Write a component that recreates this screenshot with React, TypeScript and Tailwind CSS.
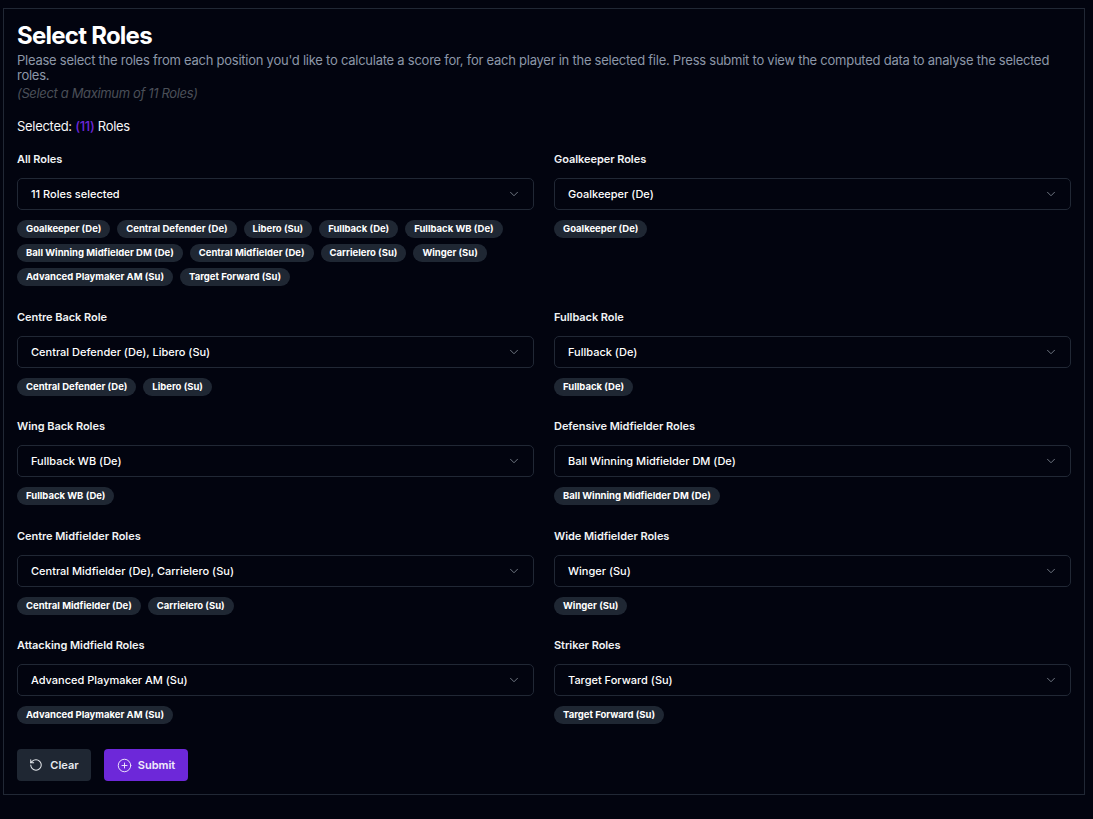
import React from "react";
import { ChevronDown, RotateCcw, CirclePlus } from "lucide-react";

const sections = [
  {
    label: "All Roles",
    value: "11 Roles selected",
    chips: [
      "Goalkeeper (De)",
      "Central Defender (De)",
      "Libero (Su)",
      "Fullback (De)",
      "Fullback WB (De)",
      "Ball Winning Midfielder DM (De)",
      "Central Midfielder (De)",
      "Carrielero (Su)",
      "Winger (Su)",
      "Advanced Playmaker AM (Su)",
      "Target Forward (Su)",
    ],
  },
  { label: "Goalkeeper Roles", value: "Goalkeeper (De)", chips: ["Goalkeeper (De)"] },
  {
    label: "Centre Back Role",
    value: "Central Defender (De), Libero (Su)",
    chips: ["Central Defender (De)", "Libero (Su)"],
  },
  { label: "Fullback Role", value: "Fullback (De)", chips: ["Fullback (De)"] },
  { label: "Wing Back Roles", value: "Fullback WB (De)", chips: ["Fullback WB (De)"] },
  {
    label: "Defensive Midfielder Roles",
    value: "Ball Winning Midfielder DM (De)",
    chips: ["Ball Winning Midfielder DM (De)"],
  },
  {
    label: "Centre Midfielder Roles",
    value: "Central Midfielder (De), Carrielero (Su)",
    chips: ["Central Midfielder (De)", "Carrielero (Su)"],
  },
  { label: "Wide Midfielder Roles", value: "Winger (Su)", chips: ["Winger (Su)"] },
  {
    label: "Attacking Midfield Roles",
    value: "Advanced Playmaker AM (Su)",
    chips: ["Advanced Playmaker AM (Su)"],
  },
  { label: "Striker Roles", value: "Target Forward (Su)", chips: ["Target Forward (Su)"] },
];

function RoleSelect({ label, value, chips }: { label: string; value: string; chips: string[] }) {
  return (
    <div>
      <div className="text-[11px] leading-[14px] font-semibold tracking-[-0.05px] text-[#f1f3f5]">{label}</div>
      <div className="mt-[12px] h-[32px] flex items-center justify-between pl-[13px] pr-[12px] rounded-[5px] border border-[#212835] text-[11px] font-medium text-white">
        <span>{value}</span>
        <ChevronDown className="w-[14px] h-[14px] text-[#7d8590]" strokeWidth={1.5} />
      </div>
      <div className="mt-[10px] flex flex-wrap gap-x-[7px] gap-y-[6px]">
        {chips.map((c) => (
          <span
            key={c}
            className="h-[18px] flex items-center px-[9px] rounded-full bg-[#1f2733] text-[9.5px] font-bold text-white"
          >
            {c}
          </span>
        ))}
      </div>
    </div>
  );
}

export default function App() {
  return (
    <div className="min-h-[819px] bg-[#02040f] pt-[8px] pl-[3px] pr-[8px] font-['Inter',sans-serif]">
      <div className="h-[787px] border border-[#212835] px-[13px] pt-[13px]">
        <h1 className="text-[24px] leading-[28px] font-bold text-white tracking-[-0.75px]">Select Roles</h1>
        <p className="mt-[3px] text-[13px] leading-[15px] tracking-[-0.25px] text-[#8c97a8]">
          Please select the roles from each position you'd like to calculate a score for, for each player in the selected file. Press submit to view the computed data to analyse the selected roles.
        </p>
        <p className="mt-[3px] text-[13px] leading-[15px] italic tracking-[-0.35px] text-[#4a4f58]">(Select a Maximum of 11 Roles)</p>
        <p className="mt-[16px] text-[13px] leading-[18px] tracking-[-0.3px] text-[#f5f6f8]">
          Selected: <span className="font-medium text-[#6d28d9]">(11)</span> Roles
        </p>
        <div className="mt-[17px] grid grid-cols-2 gap-x-[20px]">
          {sections.map((s, i) => (
            <div
              key={s.label}
              className={i < 2 ? "h-[158px]" : i === 4 || i === 5 ? "h-[110px]" : "h-[109px]"}
            >
              <RoleSelect {...s} />
            </div>
          ))}
        </div>
        <div className="mt-[2px] flex gap-[13px]">
          <button className="h-[32px] w-[74px] flex items-center justify-center gap-[7px] rounded-[4px] bg-[#1f2733] text-[11px] font-semibold text-[#e8ebef]">
            <RotateCcw className="w-[14px] h-[14px]" strokeWidth={1.75} />
            Clear
          </button>
          <button className="h-[32px] w-[84px] flex items-center justify-center gap-[6px] rounded-[4px] bg-[#6d28d9] text-[11px] font-semibold text-[#f1ecfb]">
            <CirclePlus className="w-[15px] h-[15px]" strokeWidth={1.5} />
            Submit
          </button>
        </div>
      </div>
    </div>
  );
}
